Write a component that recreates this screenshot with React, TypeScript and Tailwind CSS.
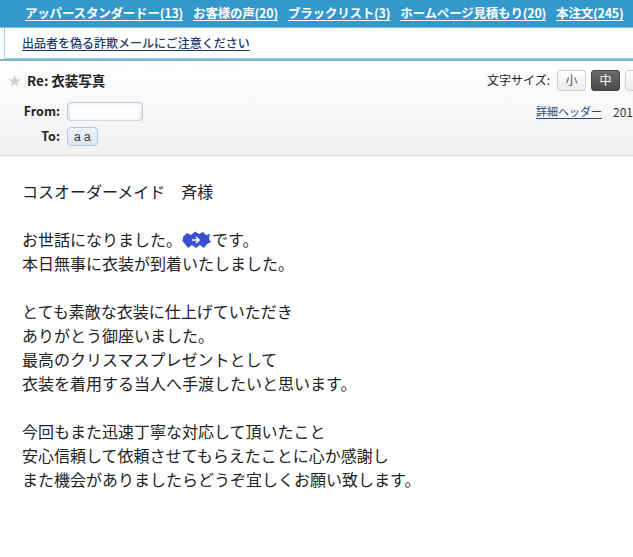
import React from 'react';

const navLinks = [
  'アッパースタンダードー(13)',
  'お客様の声(20)',
  'ブラックリスト(3)',
  'ホームページ見積もり(20)',
  '本注文(245)',
];

const bodyLines = [
  'コスオーダーメイド　斉様',
  '',
  'SCRIBBLE',
  '本日無事に衣装が到着いたしました。',
  '',
  'とても素敵な衣装に仕上げていただき',
  'ありがとう御座いました。',
  '最高のクリスマスプレゼントとして',
  '衣装を着用する当人へ手渡したいと思います。',
  '',
  '今回もまた迅速丁寧な対応して頂いたこと',
  '安心信頼して依頼させてもらえたことに心か感謝し',
  'また機会がありましたらどうぞ宜しくお願い致します。',
];

function Scribble() {
  return (
    <svg width="30" height="18" viewBox="0 0 30 18" className="inline-block align-[-3px]">
      <path
        d="M1 6 L5 2 L9 4 L13 0.5 L17 3 L21 1 L24 4 L28 3 L27 8 L29 11 L25 13 L22 17 L18 14 L14 17 L10 14 L6 17 L3 13 L0.5 10 Z"
        fill="#3a4fd2"
      />
      <path d="M10 9 L17 9 M14 6 L17 9 L14 12" stroke="#fff" strokeWidth="1.7" fill="none" />
    </svg>
  );
}

export default function App() {
  return (
    <div className="w-[633px] h-[557px] overflow-hidden bg-white font-['Noto_Sans_CJK_JP','Noto_Sans',sans-serif] text-[#222]">
      {/* top nav */}
      <div className="h-[28px] bg-[#3399cc] flex items-center gap-[10px] pl-[25px] whitespace-nowrap border-b border-[#7cc0e0]">
        {navLinks.map((l) => (
          <a key={l} className="text-white text-[12.5px] font-bold underline underline-offset-2 tracking-[-0.2px]">
            {l}
          </a>
        ))}
      </div>

      {/* warning */}
      <div className="ml-[4px] h-[31px] border-l border-b border-[#a8d0e6] flex items-center pl-[17px]">
        <a className="text-[#1d3a6c] text-[12px] font-medium underline underline-offset-2">
          出品者を偽る詐欺メールにご注意ください
        </a>
      </div>

      {/* message header */}
      <div className="h-[97px] border-t-2 border-[#7fb0c6] bg-gradient-to-b from-white to-[#f1f1f1] border-b border-b-[#d9d9d9] overflow-hidden">
        <div className="w-[760px]">
          <div className="flex items-center h-[36px] pt-[2px]">
            <div className="w-[487px] flex items-center">
              <span className="w-[27px] text-center text-[#cfcfcf] text-[13px] pl-[2px]">★</span>
              <span className="text-[13.5px] font-bold text-[#222]">Re: 衣装写真</span>
            </div>
            <div className="flex items-center whitespace-nowrap">
              <span className="w-[70px] text-[12px] text-[#222]">文字サイズ:</span>
              <span className="w-[29px] h-[21px] rounded-[3px] border border-[#cfcfcf] bg-gradient-to-b from-white to-[#ececec] text-[12px] text-[#555] flex items-center justify-center mr-[5px]">
                小
              </span>
              <span className="w-[29px] h-[21px] rounded-[3px] border border-[#444] bg-gradient-to-b from-[#6a6a6a] to-[#4a4a4a] text-[12px] text-white flex items-center justify-center mr-[5px]">
                中
              </span>
              <span className="w-[29px] h-[21px] rounded-[3px] border border-[#cfcfcf] bg-gradient-to-b from-white to-[#ececec]" />
            </div>
          </div>

          <div className="flex items-center mt-[5px]">
            <div className="w-[536px] flex items-center">
              <span className="w-[60px] text-right text-[12.5px] font-bold text-[#222]">From:</span>
              <span className="ml-[7px] w-[76px] h-[19px] rounded-[4px] border border-[#b3c6dc] bg-gradient-to-b from-[#eef3f9] to-[#dce6f1] flex items-center px-[4px]">
                <span className="w-full h-[12px] bg-white rounded-[2px] shadow-[0_0_3px_2px_#fff]" />
              </span>
            </div>
            <div className="flex items-center whitespace-nowrap text-[11px]">
              <a className="text-[#2a4a7c] underline underline-offset-2">詳細ヘッダー</a>
              <span className="ml-[11px] text-[#333] text-[12px]">2012/12/24 15:32</span>
            </div>
          </div>

          <div className="flex items-center mt-[6px]">
            <span className="w-[60px] text-right text-[12.5px] font-bold text-[#222]">To:</span>
            <span className="ml-[7px] h-[19px] px-[6px] rounded-[4px] border border-[#b3c6dc] bg-gradient-to-b from-[#eef3f9] to-[#dce6f1] flex items-center text-[12px] text-[#333] font-['Liberation_Sans',sans-serif]">
              a a
            </span>
          </div>
        </div>
      </div>

      {/* body */}
      <div className="pl-[22px] pt-[23px] text-[16px] leading-[24px] text-[#222]">
        {bodyLines.map((line, i) =>
          line === 'SCRIBBLE' ? (
            <div key={i} className="whitespace-nowrap">
              お世話になりました。
              <Scribble />
              です。
            </div>
          ) : (
            <div key={i} className="whitespace-nowrap min-h-[24px]">
              {line}
            </div>
          )
        )}
      </div>
    </div>
  );
}
